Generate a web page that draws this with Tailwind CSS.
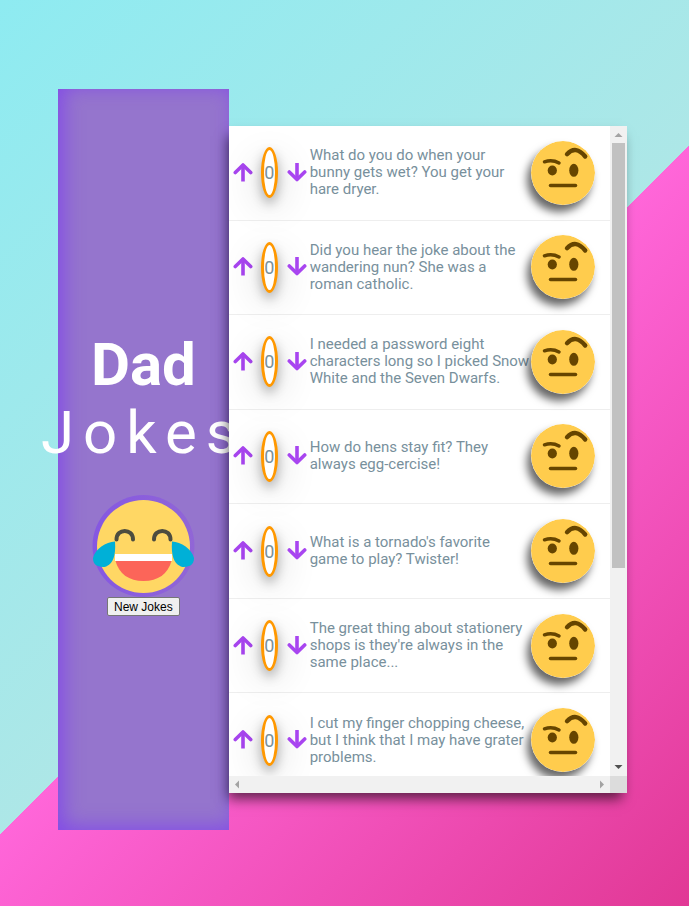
<!DOCTYPE html>
<html lang="en">
<head>
<meta charset="utf-8">
<meta name="viewport" content="width=device-width, initial-scale=1">
<title>Dad Jokes</title>
<script src="https://cdn.jsdelivr.net/npm/@tailwindcss/browser@4"></script>
</head>
<body class="font-[Roboto,sans-serif]">
<svg class="hidden" aria-hidden="true">
  <symbol id="up" viewBox="0 0 20 20"><path d="M10 18.500V2" fill="none" stroke="currentColor" stroke-width="3.600"/><path d="M2.300 9.500 10 2l7.700 7.500" fill="none" stroke="currentColor" stroke-width="3.600" stroke-linecap="round" stroke-linejoin="round"/></symbol>
  <symbol id="down" viewBox="0 0 20 20"><path d="M10 0v16" fill="none" stroke="currentColor" stroke-width="3.600"/><path d="M2.300 9 10 16.500l7.700-7.500" fill="none" stroke="currentColor" stroke-width="3.600" stroke-linecap="round" stroke-linejoin="round"/></symbol>
  <symbol id="face" viewBox="0 0 64 64">
    <circle cx="32" cy="32" r="32" fill="#ffcc4d"/>
    <g fill="#664500"><ellipse cx="21.300" cy="29.500" rx="4.600" ry="5"/><ellipse cx="42.800" cy="29.300" rx="4.600" ry="6.500"/></g>
    <g fill="none" stroke="#664500" stroke-width="3.500" stroke-linecap="round"><path d="M19.500 44.500h25"/><path d="M13.500 20.800c5-1.600 10-1.300 14.500 1.200"/><path d="M36 13.200c6-6.400 12-5.200 18.200 2.300" stroke-width="4.400"/></g>
  </symbol>
</svg>
<main class="flex h-screen overflow-hidden bg-[linear-gradient(135deg,#8eebf1_0%,#ade7e7_52.3%,#ff66d9_52.3%,#e13895_100%)] pt-[89px] pr-[62px] pb-[76px] pl-[58px]">
  <aside class="flex w-[30%] shrink-0 flex-col items-center justify-center bg-[#9575cd] pt-[28px] shadow-[inset_5px_-3px_20px_rgba(124,60,240,0.75)]">
    <h1 class="flex flex-col items-center text-[60px] leading-[68px] font-normal text-white">
      <span class="font-bold">Dad</span>
      <span class="tracking-[9px]">Jokes</span>
    </h1>
    <svg class="mt-[28px] h-[102px] w-[103px] shrink-0" viewBox="0 0 103 102" role="img" aria-label="Laughing face">
      <defs><linearGradient id="ring"><stop offset="0" stop-color="#8557e2"/><stop offset="1" stop-color="#9166d6"/></linearGradient></defs>
      <circle cx="51.500" cy="51" r="51" fill="url(#ring)"/>
      <circle cx="51.500" cy="51.500" r="46.500" fill="#ffd764"/>
      <path d="M24.500 44.500c0-11.500 16.500-11.500 16.500 0M62 44.500c0-11.500 16.500-11.500 16.500 0" fill="none" stroke="#4d4d3f" stroke-width="4" stroke-linecap="round"/>
      <path d="M23 59h57v7H23z" fill="#fff"/>
      <path d="M23.500 66h56C76 79 66 86 51.500 86S27 79 23.500 66z" fill="#fc6559"/>
      <path d="M23 46.500C14 47 3 54 1 63c0 3 1 7 5 8 3 1 7 1.500 9 0 6-3 9-10 8-24.500zM80 46.500c9 .5 20 7.500 22 16.500 0 3-1 7-5 8-3 1-7 1.500-9 0-6-3-9-10-8-24.500z" fill="#00b0d7"/>
    </svg>
    <button class="h-[19px] w-[73px] shrink-0 rounded-[2px] border border-[#767676] bg-[#efefef] text-center font-['Liberation_Sans',sans-serif] text-[12px] leading-[16px] text-black">New Jokes</button>
  </aside>
  <section class="relative my-[37px] flex min-w-0 flex-1 flex-col bg-white shadow-[-3px_8px_12px_-2px_rgba(0,0,0,0.6)]">
    <div class="flex min-h-0 flex-1">
      <ul id="jokes" class="grid h-full min-w-0 flex-1 auto-rows-[minmax(0,1fr)] overflow-hidden"></ul>
      <div class="flex w-[17px] shrink-0 flex-col items-center justify-between bg-[#f1f1f1]">
        <svg class="h-[17px] w-[17px]" viewBox="0 0 17 17"><path d="M4.500 11h8l-4-4z" fill="#a3a3a3"/></svg>
        <div class="w-[13px] flex-1"><div class="h-[69%] bg-[#c1c1c1]"></div></div>
        <svg class="h-[17px] w-[17px]" viewBox="0 0 17 17"><path d="M4.500 6h8l-4 4z" fill="#505050"/></svg>
      </div>
    </div>
    <div class="flex h-[17px] shrink-0 bg-[#f1f1f1]">
      <svg class="h-[17px] w-[17px]" viewBox="0 0 17 17"><path d="M10 4.500v8l-4-4z" fill="#a3a3a3"/></svg>
      <div class="flex-1"></div>
      <svg class="h-[17px] w-[17px]" viewBox="0 0 17 17"><path d="M7 4.500v8l4-4z" fill="#a3a3a3"/></svg>
      <div class="w-[17px] bg-[#dcdcdc]"></div>
    </div>
  </section>
</main>
<script>
const jokes = [
  ["What do you do when your", "bunny gets wet? You get your", "hare dryer."],
  ["Did you hear the joke about the", "wandering nun? She was a", "roman catholic."],
  ["I needed a password eight", "characters long so I picked Snow", "White and the Seven Dwarfs."],
  ["How do hens stay fit? They", "always egg-cercise!"],
  ["What is a tornado's favorite", "game to play? Twister!"],
  ["The great thing about stationery", "shops is they're always in the", "same place..."],
  ["I cut my finger chopping cheese,", "but I think that I may have grater", "problems."]
];
const list = document.getElementById("jokes");
list.innerHTML = `<li class="h-[662px]"><ul class="grid h-full grid-rows-7">${jokes.map(lines => `
  <li class="flex min-h-0 items-center border-b border-[#eeeeee] pr-[15px] pl-[4px] text-[#78909c]">
    <button aria-label="Upvote" class="text-[#a845f0]"><svg class="h-[20px] w-[20px]"><use href="#up"/></svg></button>
    <span class="mr-[9px] ml-[8px] flex h-[51px] w-[17px] shrink-0 items-center justify-center rounded-[50%] border-3 border-[#ff9800] bg-white text-[18px] shadow-[0_10px_38px_rgba(0,0,0,0.2),0_6px_12px_rgba(0,0,0,0.3)]">0</span>
    <button aria-label="Downvote" class="text-[#a845f0]"><svg class="h-[20px] w-[20px]"><use href="#down"/></svg></button>
    <p class="ml-[3px] min-w-0 flex-1 text-[15px] leading-[17px] whitespace-nowrap">${lines.join("<br>")}</p>
    <svg class="relative h-[64px] w-[64px] shrink-0 rounded-full shadow-[-4px_7px_9px_rgba(0,0,0,0.6)]" role="img" aria-label="Raised eyebrow"><use href="#face"/></svg>
  </li>`).join("")}</ul></li>`;
</script>
</body>
</html>
